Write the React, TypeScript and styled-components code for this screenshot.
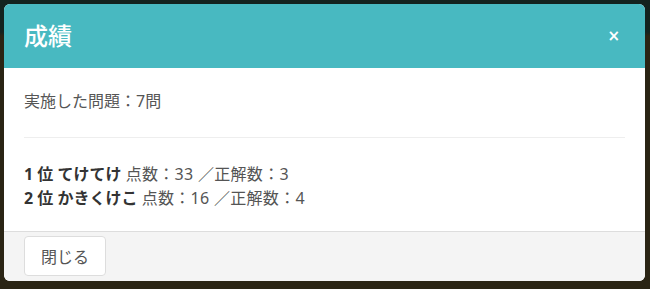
import React from 'react';
import styled, { createGlobalStyle } from 'styled-components';

const GlobalStyle = createGlobalStyle`
  html, body {
    margin: 0;
    padding: 0;
  }
  body {
    background: linear-gradient(to bottom, #13231f 0px, #13231f 32px, #2a2414 36px, #2a2414 100%);
    font-family: "Noto Sans", "Noto Sans CJK JP", sans-serif;
    min-height: 289px;
  }
`;

const Backdrop = styled.div`
  padding: 4px 5px 8px 4px;
`;

const Modal = styled.div`
  background: #ffffff;
  border-radius: 6px;
  overflow: hidden;
`;

const Header = styled.div`
  display: flex;
  align-items: center;
  justify-content: space-between;
  height: 64px;
  padding: 0 25px 0 20px;
  background: #48b9c1;
  color: #ffffff;
`;

const Title = styled.h4`
  margin: 0;
  font-size: 24px;
  font-weight: 500;
  line-height: 1;
`;

const Close = styled.button`
  border: none;
  background: none;
  padding: 0;
  color: #ffffff;
  font-family: "DejaVu Sans", sans-serif;
  font-size: 15px;
  font-weight: bold;
  line-height: 1;
  cursor: pointer;
`;

const Body = styled.div`
  padding: 21px 20px 21px 20px;
  color: #555555;
  font-size: 16px;
`;

const Line = styled.p`
  margin: 0;
  line-height: 24px;
`;

const Divider = styled.hr`
  border: none;
  border-top: 1px solid #eeeeee;
  margin: 24px 0 24px 0;
`;

const Rank = styled.strong`
  color: #333333;
  font-weight: 700;
`;

const Score = styled.span`
  letter-spacing: 0.3px;
`;

const Footer = styled.div`
  display: flex;
  padding: 4px 20px 5px 20px;
  background: #f4f4f4;
  border-top: 1px solid #dddddd;
`;

const Button = styled.button`
  height: 40px;
  padding: 0 16px;
  background: #ffffff;
  border: 1px solid #dddddd;
  border-radius: 4px;
  color: #555555;
  font-family: inherit;
  font-size: 16px;
  cursor: pointer;
`;

const results = [
  { pos: 1, name: 'てけてけ', score: 33, correct: 3 },
  { pos: 2, name: 'かきくけこ', score: 16, correct: 4 },
];

export default function App() {
  return (
    <>
      <GlobalStyle />
      <Backdrop>
        <Modal>
          <Header>
            <Title>成績</Title>
            <Close>×</Close>
          </Header>
          <Body>
            <Line>実施した問題：7問</Line>
            <Divider />
            {results.map((r) => (
              <Line key={r.pos}>
                <Rank>{r.pos} 位 {r.name}</Rank>{' '}
                <Score>点数：{r.score} ／正解数：{r.correct}</Score>
              </Line>
            ))}
          </Body>
          <Footer>
            <Button>閉じる</Button>
          </Footer>
        </Modal>
      </Backdrop>
    </>
  );
}
